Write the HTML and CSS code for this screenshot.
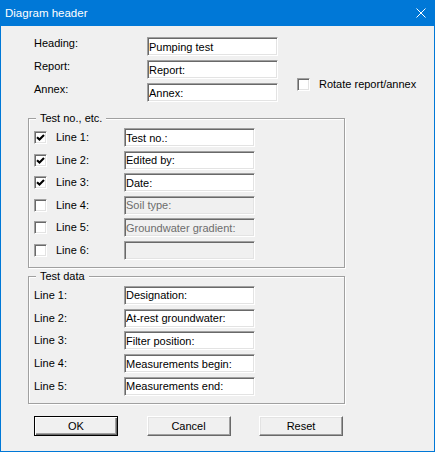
FILE: index.html
```html
<!DOCTYPE html>
<html lang="en">
<head>
<meta charset="UTF-8">
<title>Diagram header</title>
<link rel="stylesheet" href="styles.css">
</head>
<body>
<div class="window">
  <div class="titlebar">
    <span class="title">Diagram header</span>
    <svg class="close" width="10" height="10" viewBox="0 0 10 10">
      <path d="M0.5 0.5 L9.5 9.5 M9.5 0.5 L0.5 9.5" stroke="#fff" stroke-width="1" fill="none"/>
    </svg>
  </div>

  <div class="content">
    <div class="fields">
      <span class="lbl">Heading:</span>
      <input class="field" type="text" value="Pumping test">
      <span></span>
      <span class="lbl">Report:</span>
      <input class="field" type="text" value="Report:">
      <div class="rotate">
        <span class="check"></span>
        <span>Rotate report/annex</span>
      </div>
      <span class="lbl">Annex:</span>
      <input class="field" type="text" value="Annex:">
    </div>

    <fieldset class="group">
      <legend>Test no., etc.</legend>
      <div class="rows rows-check">
        <span class="check on"><svg width="11" height="11" viewBox="0 0 11 11"><polyline points="2,5.2 4.5,7.6 9,3.1" fill="none" stroke="#000" stroke-width="2.1"/></svg></span>
        <span>Line 1:</span>
        <input class="field" type="text" value="Test no.:">

        <span class="check on"><svg width="11" height="11" viewBox="0 0 11 11"><polyline points="2,5.2 4.5,7.6 9,3.1" fill="none" stroke="#000" stroke-width="2.1"/></svg></span>
        <span>Line 2:</span>
        <input class="field" type="text" value="Edited by:">

        <span class="check on"><svg width="11" height="11" viewBox="0 0 11 11"><polyline points="2,5.2 4.5,7.6 9,3.1" fill="none" stroke="#000" stroke-width="2.1"/></svg></span>
        <span>Line 3:</span>
        <input class="field" type="text" value="Date:">

        <span class="check"></span>
        <span>Line 4:</span>
        <input class="field" type="text" value="Soil type:" disabled>

        <span class="check"></span>
        <span>Line 5:</span>
        <input class="field" type="text" value="Groundwater gradient:" disabled>

        <span class="check"></span>
        <span>Line 6:</span>
        <input class="field" type="text" value="" disabled>
      </div>
    </fieldset>

    <fieldset class="group group-data">
      <legend>Test data</legend>
      <div class="rows rows-data">
        <span>Line 1:</span>
        <input class="field" type="text" value="Designation:">
        <span>Line 2:</span>
        <input class="field" type="text" value="At-rest groundwater:">
        <span>Line 3:</span>
        <input class="field" type="text" value="Filter position:">
        <span>Line 4:</span>
        <input class="field" type="text" value="Measurements begin:">
        <span>Line 5:</span>
        <input class="field" type="text" value="Measurements end:">
      </div>
    </fieldset>

    <div class="buttons">
      <button class="btn btn-default">OK</button>
      <button class="btn">Cancel</button>
      <button class="btn">Reset</button>
    </div>
  </div>
</div>
</body>
</html>
```

FILE: styles.css
```css
body {
  margin: 0;
  background: #fff;
  font-family: "Liberation Sans", Arial, sans-serif;
  font-size: 11px;
  color: #000;
}
.window {
  width: 435px;
  height: 452px;
  box-sizing: border-box;
  border: 1px solid #0078d7;
  border-top: 0;
  background: #f0f0f0;
}
.titlebar {
  height: 26px;
  background: #0078d7;
  color: #fff;
  display: flex;
  align-items: center;
  justify-content: space-between;
  padding: 0 8px 0 4px;
}
.title {
  font-size: 11.5px;
}
.close {
  display: block;
}
.content {
  padding: 11px 0 0 33px;
}

/* heading / report / annex */
.fields {
  display: grid;
  grid-template-columns: 113px 131px auto;
  grid-template-rows: 19px 19px 19px;
  row-gap: 4px;
}
.lbl {
  align-self: start;
  line-height: 13px;
}
.rotate {
  grid-column: 3;
  grid-row: 2 / 4;
  align-self: end;
  margin: 0 0 11px 19px;
  display: flex;
  align-items: center;
  gap: 9px;
  line-height: 13px;
}

.field {
  width: 131px;
  height: 19px;
  box-sizing: border-box;
  margin: 0;
  padding: 0 1px;
  border: 1px solid;
  border-color: #a0a0a0 #fff #fff #a0a0a0;
  box-shadow: inset 1px 1px 0 #696969, inset -1px -1px 0 #e3e3e3;
  background: #fff;
  font: inherit;
  color: #000;
  outline: none;
}
.field:disabled {
  background: #f0f0f0;
  color: #6d6d6d;
  -webkit-text-fill-color: #6d6d6d;
}

.check {
  width: 13px;
  height: 13px;
  box-sizing: border-box;
  border: 1px solid;
  border-color: #a0a0a0 #fff #fff #a0a0a0;
  box-shadow: inset 1px 1px 0 #696969, inset -1px -1px 0 #e3e3e3;
  background: #fff;
}
.check svg {
  display: block;
}

/* group boxes */
.group {
  width: 317px;
  box-sizing: border-box;
  margin: 10px 0 0 -6px;
  padding: 3px 0 7px 5px;
  border: 1px solid #a0a0a0;
  box-shadow: inset 1px 1px 0 #fff, 1px 1px 0 #fff;
  min-inline-size: 0;
}
.group legend {
  margin-left: 2px;
  padding: 0 4px;
  line-height: 13px;
  background: #f0f0f0;
}
.group-data {
  margin-top: 2px;
}
.rows {
  display: grid;
  grid-auto-rows: 19px;
  align-items: center;
  line-height: 13px;
}
.rows-check {
  grid-template-columns: 22px 68px 131px;
  row-gap: 3.6px;
}
.rows-data {
  grid-template-columns: 90px 131px;
  row-gap: 3.75px;
}

/* buttons */
.buttons {
  display: flex;
  gap: 28.5px;
  margin-top: 12px;
}
.btn {
  width: 84px;
  height: 20px;
  box-sizing: border-box;
  margin: 0;
  padding: 0;
  border: 1px solid;
  border-color: #fff #696969 #696969 #fff;
  box-shadow: inset -1px -1px 0 #a0a0a0, inset 1px 1px 0 #e3e3e3;
  background: #f0f0f0;
  font: inherit;
  color: #000;
}
.btn-default {
  border-color: #000;
  box-shadow: inset 1px 1px 0 #fff, inset -1px -1px 0 #696969, inset -2px -2px 0 #a0a0a0;
}
```
